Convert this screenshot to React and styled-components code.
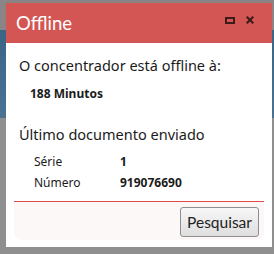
import React from "react";
import styled, { createGlobalStyle } from "styled-components";

const GlobalStyle = createGlobalStyle`
  html, body {
    margin: 0;
    padding: 0;
    background: #8d8d8d;
  }
  body {
    font-family: "Noto Sans", Tahoma, sans-serif;
    color: #1b1b1b;
  }
`;

const Backdrop = styled.div`
  width: 274px;
  height: 254px;
  padding: 3px 2px 0 6px;
  box-sizing: border-box;
  background: linear-gradient(
    to bottom,
    #8a8486 0,
    #8a8486 30px,
    #3b6584 30px,
    #4a7393 118px,
    #8f8f8f 118px
  );
`;

const Dialog = styled.div`
  width: 266px;
  height: 244px;
  background: #fff;
  display: flex;
  flex-direction: column;
`;

const TitleBar = styled.div`
  height: 40px;
  flex: none;
  background: #d35654;
  display: flex;
  align-items: center;
  padding: 0 18px 0 10px;
`;

const Title = styled.div`
  flex: 1;
  color: #fff;
  font-family: Lato, "Open Sans", sans-serif;
  font-size: 18.5px;
  line-height: 22px;
`;

const Tools = styled.div`
  display: flex;
  align-items: center;
  gap: 11px;
  margin-bottom: 6px;

  svg {
    display: block;
  }
`;

const Body = styled.div`
  padding: 13px 8px 0 13px;
`;

const Heading = styled.div`
  font-size: 14.5px;
  line-height: 18px;
`;

const Strong = styled.div`
  font-size: 12px;
  line-height: 16px;
  font-weight: bold;
  padding-left: 11px;
  margin: 12px 0 23px;
`;

const Grid = styled.div`
  display: grid;
  grid-template-columns: 86px 1fr;
  row-gap: 5px;
  padding: 11px 0 0 15px;
  font-size: 12px;
  line-height: 16px;
`;

const Value = styled.span`
  font-weight: ${(p) => (p.$bold ? "bold" : "normal")};
`;

const Footer = styled.div`
  margin: 10px 8px 0 8px;
  border-top: 1px solid #e04a4a;
  background: #fdf8f8;
  border-radius: 0 0 8px 8px;
  height: 39px;
  display: flex;
  justify-content: flex-end;
  align-items: flex-start;
  padding: 5px 5px 0 0;
  box-sizing: border-box;
`;

const Button = styled.button`
  width: 79px;
  height: 30px;
  font-family: Lato, "Open Sans", sans-serif;
  font-size: 15.5px;
  color: #222;
  border: 1px solid #8e8e8e;
  border-radius: 3px;
  background: linear-gradient(#f7f7f7, #dedede);
  padding: 0;
`;

export default function App() {
  return (
    <>
      <GlobalStyle />
      <Backdrop>
        <Dialog>
          <TitleBar>
            <Title>Offline</Title>
            <Tools>
              <svg width="10" height="7" viewBox="0 0 10 7">
                <rect x="1" y="1" width="8" height="5" fill="none" stroke="#3b1c1b" strokeWidth="2" />
              </svg>
              <svg width="8" height="8" viewBox="0 0 8 8">
                <path d="M0.7 0.7L7.3 7.3M7.3 0.7L0.7 7.3" stroke="#3b1c1b" strokeWidth="2.1" />
              </svg>
            </Tools>
          </TitleBar>
          <Body>
            <Heading>O concentrador está offline à:</Heading>
            <Strong>188 Minutos</Strong>
            <Heading>Último documento enviado</Heading>
            <Grid>
              <span>Série</span>
              <Value $bold>1</Value>
              <span>Número</span>
              <Value $bold>919076690</Value>
            </Grid>
          </Body>
          <Footer>
            <Button>Pesquisar</Button>
          </Footer>
        </Dialog>
      </Backdrop>
    </>
  );
}
